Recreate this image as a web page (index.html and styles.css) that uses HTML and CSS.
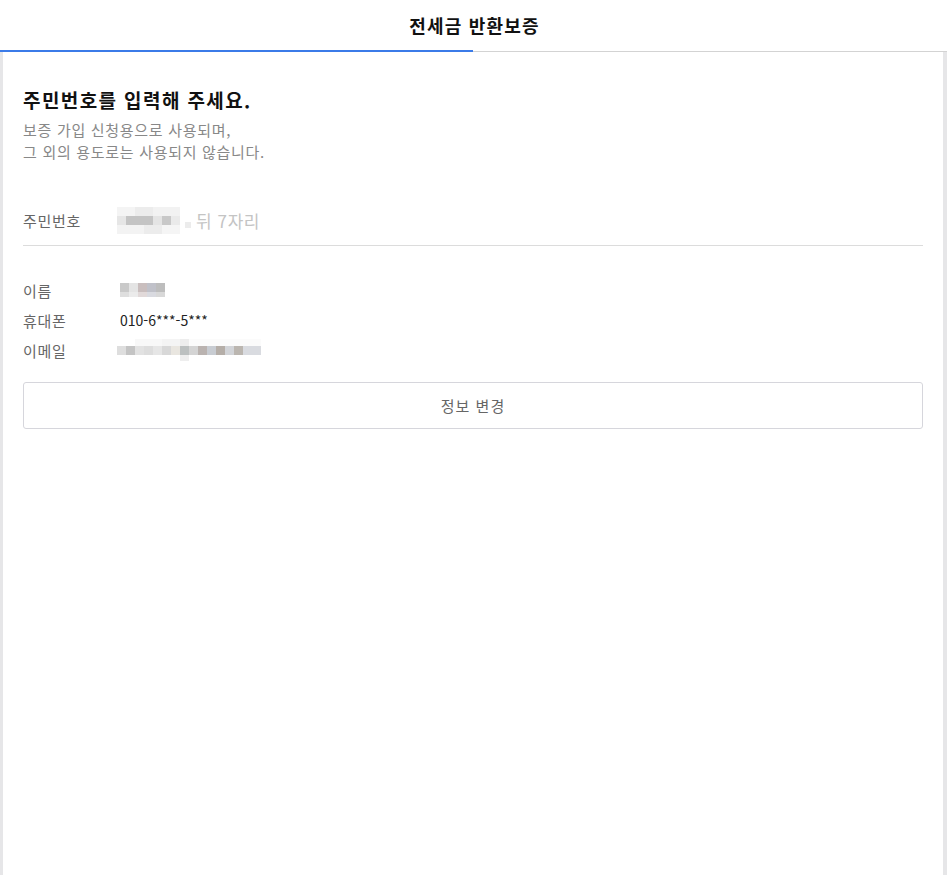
FILE: index.html
```html
<!DOCTYPE html>
<html lang="ko">
<head>
    <meta charset="UTF-8">
    <meta name="viewport" content="width=device-width, initial-scale=1.0">
    <title>전세금 반환보증</title>
    <link rel="stylesheet" href="styles.css">
</head>
<body>
    <header class="top-bar">
        <h1>전세금 반환보증</h1>
    </header>
    <div class="progress"><div class="progress-fill"></div></div>

    <main class="page">
        <section class="intro">
            <h2>주민번호를 입력해 주세요.</h2>
            <p>보증 가입 신청용으로 사용되며,<br>그 외의 용도로는 사용되지 않습니다.</p>
        </section>

        <div class="ssn-row">
            <span class="label">주민번호</span>
            <div class="ssn-value">
                <div class="mosaic ssn-mosaic">
                    <i class="m-row r1"></i>
                    <i class="m-row r2"></i>
                    <i class="m-row r3"></i>
                </div>
                <span class="ssn-dot"></span>
                <span class="placeholder">뒤 7자리</span>
            </div>
        </div>

        <dl class="info">
            <div class="info-row">
                <dt>이름</dt>
                <dd>
                    <div class="mosaic name-mosaic">
                        <i class="m-row n1"></i>
                        <i class="m-row n2"></i>
                    </div>
                </dd>
            </div>
            <div class="info-row">
                <dt>휴대폰</dt>
                <dd class="phone">010-6***-5***</dd>
            </div>
            <div class="info-row">
                <dt>이메일</dt>
                <dd>
                    <div class="mosaic mail-mosaic">
                        <i class="m-row e1"></i>
                        <i class="m-row e2"></i>
                        <i class="m-row e3"></i>
                    </div>
                </dd>
            </div>
        </dl>

        <button class="change-button">정보 변경</button>
    </main>
</body>
</html>
```

FILE: styles.css
```css
* {
    margin: 0;
    padding: 0;
    box-sizing: border-box;
    font-family: "Noto Sans CJK KR", "Noto Sans", sans-serif;
}
html, body {
    height: 100%;
}
body {
    background-color: #fff;
    color: #222;
    display: flex;
    flex-direction: column;
    overflow: hidden;
}
.top-bar {
    height: 50px;
    display: flex;
    align-items: center;
    justify-content: center;
}
.top-bar h1 {
    font-size: 18px;
    font-weight: bold;
    color: #111;
    letter-spacing: 1.2px;
    margin-left: 2px;
}
.progress {
    height: 2px;
    background-color: #fff;
    border-bottom: 1px solid #d3d3d3;
}
.progress-fill {
    width: 473px;
    height: 2px;
    background-color: #3b7be8;
}
.page {
    flex: 1;
    border-left: 3px solid #e6e6e8;
    border-right: 4px solid #e6e6e8;
    padding: 33px 20px 0;
}
.intro h2 {
    font-size: 19px;
    font-weight: bold;
    color: #111;
    line-height: 30px;
    letter-spacing: 1.4px;
}
.intro p {
    margin-top: 4px;
    font-size: 15px;
    line-height: 22px;
    color: #888;
    letter-spacing: 0.7px;
}
.ssn-row {
    margin-top: 39px;
    display: flex;
    align-items: center;
    height: 44px;
    border-bottom: 1px solid #dcdcdc;
    padding-bottom: 6px;
}
.label {
    width: 94px;
    font-size: 15px;
    color: #666;
    letter-spacing: 0.7px;
}
.ssn-value {
    display: flex;
    align-items: center;
}
.placeholder {
    font-size: 17px;
    color: #c4c4c4;
    margin-left: 5px;
    letter-spacing: 0.6px;
}
.mosaic {
    display: flex;
    flex-direction: column;
}
.m-row {
    display: block;
}
.ssn-mosaic .m-row {
    width: 63px;
    height: 9px;
}
.ssn-mosaic .r1 {
    background: linear-gradient(to right, #f4f4f4 0 18px, #ececec 18px 36px, #f2f2f2 36px 63px);
}
.ssn-mosaic .r2 {
    background: linear-gradient(to right, #e6e6e6 0 9px, #c4c4c4 9px 36px, #e4e4e4 36px 45px, #c8c8c8 45px 54px, #eaeaea 54px 63px);
}
.ssn-mosaic .r3 {
    background: linear-gradient(to right, #f3f3f3 0 27px, #ececec 27px 45px, #f5f5f5 45px 63px);
}
.ssn-dot {
    width: 6px;
    height: 6px;
    margin: 8px 0 0 5px;
    background-color: #ececec;
}
.info {
    margin-top: 29px;
}
.info-row {
    display: flex;
    align-items: center;
    height: 30px;
}
.info-row dt {
    width: 94px;
    font-size: 15px;
    color: #666;
    letter-spacing: 0.7px;
}
.info-row dd {
    margin-left: 3px;
    color: #222;
}
.phone {
    font-size: 14px;
}
.name-mosaic .m-row {
    width: 45px;
}
.name-mosaic .n1 {
    height: 9px;
    background: linear-gradient(to right, #c9c9c9 0 9px, #e4e4e4 9px 18px, #c9bebe 18px 27px, #c0c1c9 27px 36px, #bdbdbd 36px 45px);
}
.name-mosaic .n2 {
    height: 5px;
    background: linear-gradient(to right, #dedede 0 9px, #ebebeb 9px 18px, #e1d9d9 18px 27px, #d9dae0 27px 36px, #d8d8d8 36px 45px);
}
.mail-mosaic {
    margin-left: -3px;
}
.mail-mosaic .m-row {
    width: 144px;
}
.mail-mosaic .e1 {
    height: 7px;
    background: linear-gradient(to right, #fff 0 18px, #f8f8f8 18px 45px, #f4f4f4 45px 63px, #ededed 63px 72px, #fbfbfb 72px 144px);
}
.mail-mosaic .e2 {
    height: 9px;
    background: linear-gradient(to right, #dedede 0 9px, #c4c4c4 9px 18px, #e2e2e2 18px 27px, #dddddd 27px 36px, #e6e6e6 36px 45px, #d8d8d8 45px 54px, #e9e6e0 54px 63px, #bcc0c0 63px 72px, #d4d4d4 72px 81px, #bab3b0 81px 90px, #c8ccd2 90px 99px, #b5aea8 99px 108px, #d2d4d8 108px 117px, #bbb6b0 117px 126px, #d9dbe0 126px 144px);
}
.mail-mosaic .e3 {
    height: 6px;
    background: linear-gradient(to right, #fff 0 63px, #eeeeee 63px 72px, #fff 72px 144px);
}
.change-button {
    margin-top: 17px;
    width: 100%;
    height: 47px;
    background-color: #fff;
    border: 1px solid #d6d6dc;
    border-radius: 3px;
    font-size: 15px;
    color: #666;
    letter-spacing: 1px;
    cursor: pointer;
}
```
